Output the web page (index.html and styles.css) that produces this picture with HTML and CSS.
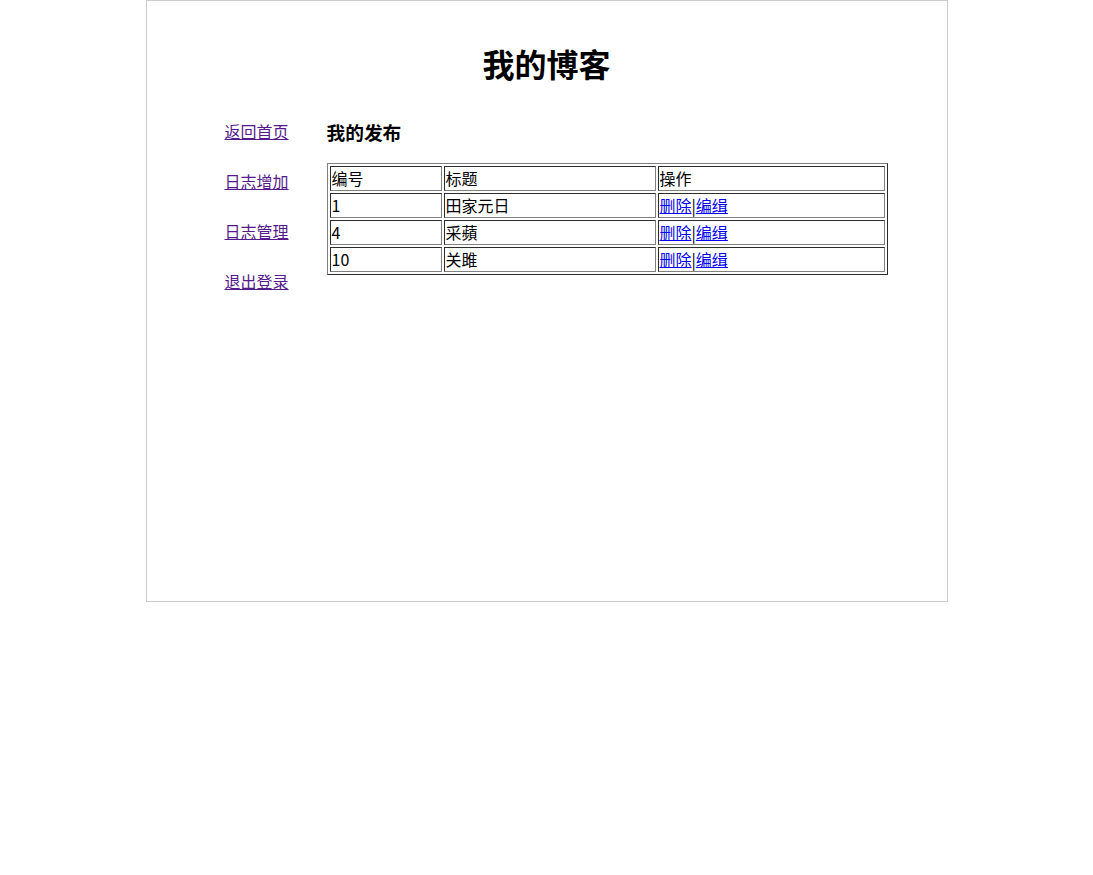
FILE: index.html
```html
<!DOCTYPE html>
<html lang="zh-CN">
<head>
<meta charset="utf-8">
<title>我的博客</title>
<link rel="stylesheet" href="styles.css">
</head>
<body>
<div class="page">
  <h1 class="title">我的博客</h1>
  <div class="main">
    <ul class="nav">
      <li><a class="visited" href="#">返回首页</a></li>
      <li><a class="visited" href="#">日志增加</a></li>
      <li><a class="visited" href="#">日志管理</a></li>
      <li><a class="visited" href="#">退出登录</a></li>
    </ul>
    <div class="content">
      <h3 class="sub">我的发布</h3>
      <table class="list">
        <tr><td class="c1">编号</td><td class="c2">标题</td><td class="c3">操作</td></tr>
        <tr><td>1</td><td>田家元日</td><td><a href="#">删除</a>|<a href="#">编缉</a></td></tr>
        <tr><td>4</td><td>采蘋</td><td><a href="#">删除</a>|<a href="#">编缉</a></td></tr>
        <tr><td>10</td><td>关雎</td><td><a href="#">删除</a>|<a href="#">编缉</a></td></tr>
      </table>
    </div>
  </div>
</div>
</body>
</html>
```
FILE: styles.css
```css
html, body {
  margin: 0;
  padding: 0;
  background: #fff;
}
body {
  font-family: "Noto Sans CJK SC", "Microsoft YaHei", sans-serif;
  font-size: 16px;
  color: #000;
}
.page {
  width: 800px;
  height: 600px;
  margin: 0 auto;
  border: 1px solid #cccccc;
}
.title {
  margin: 42px 0 0;
  font-size: 32px;
  line-height: 40px;
  font-weight: bold;
  text-align: center;
}
.main {
  display: flex;
  margin-top: 23px;
  padding-left: 78px;
}
.nav {
  list-style: none;
  margin: 0;
  padding: 0;
  width: 102px;
}
.nav li {
  line-height: 50px;
  height: 50px;
}
.nav a {
  color: #551a8b;
  text-decoration: underline;
}
.content {
  flex: none;
}
.sub {
  margin: 13px 0 18px;
  font-size: 18.72px;
  line-height: 26px;
  font-weight: bold;
}
.list {
  width: 561px;
  border: 1px outset #808080;
  border-spacing: 2px;
  border-collapse: separate;
}
.list td {
  border: 1px inset #808080;
  padding: 1px;
  line-height: 21px;
  height: 21px;
  vertical-align: middle;
}
.list .c1 { width: 108px; }
.list .c2 { width: 208px; }
.list a {
  color: #0000ee;
  text-decoration: underline;
}
```
